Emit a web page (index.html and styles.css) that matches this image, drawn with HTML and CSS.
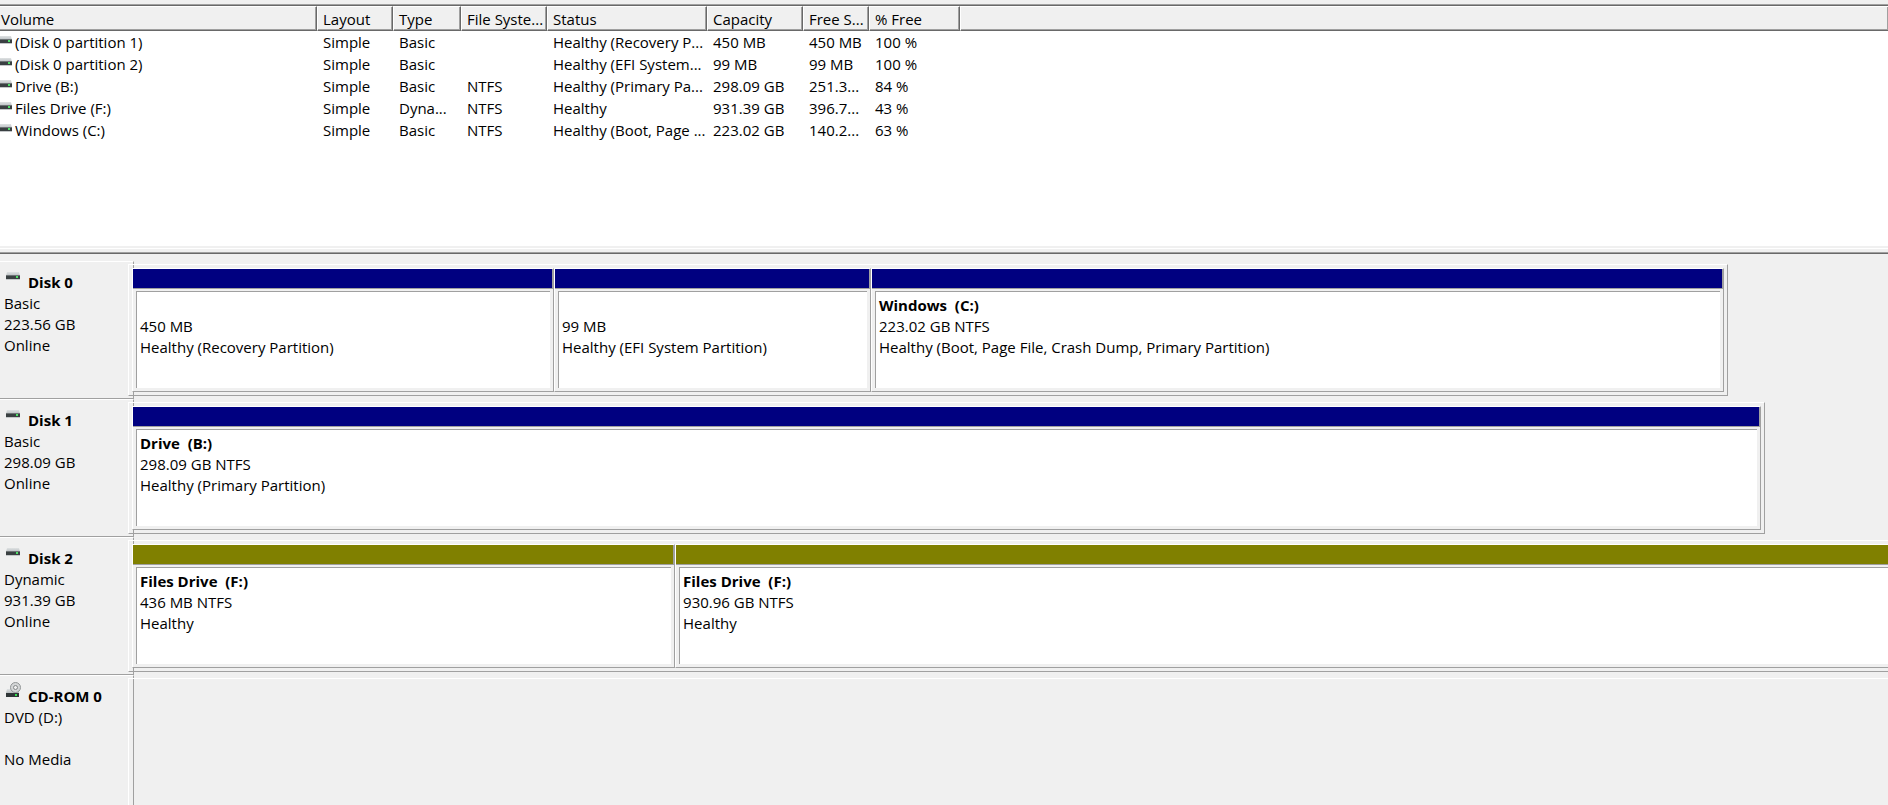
FILE: index.html
```html
<!DOCTYPE html>
<html lang="en">

<head>
    <meta charset="UTF-8">
    <meta name="viewport" content="width=device-width, initial-scale=1.0">
    <title>Disk Management</title>
    <link rel="stylesheet" href="styles.css">
</head>

<body>

    <!-- shared drive icons -->
    <svg class="defs" width="0" height="0" aria-hidden="true">
        <linearGradient id="lid" x1="0" y1="0" x2="0" y2="1">
            <stop offset="0" stop-color="#dfe2e3" />
            <stop offset="1" stop-color="#b8bdc0" />
        </linearGradient>
        <symbol id="drive" viewBox="0 0 14 8">
            <path d="M1 0h12L14 4H0z" fill="url(#lid)" />
            <rect y="3" width="14" height="4" fill="#6d7375" />
            <rect y="4" width="14" height="3" fill="#3a4042" />
            <rect y="7" width="14" height="1" fill="#c4c7c9" />
            <rect x="10" y="4" width="2" height="2" fill="#4fe068" />
        </symbol>
        <symbol id="cdrom" viewBox="0 0 15 16">
            <path d="M1 7h11l1 4H0z" fill="url(#lid)" />
            <circle cx="9.500" cy="5.500" r="5" fill="#d4d6d7" stroke="#929697" />
            <circle cx="9.500" cy="5.500" r="2" fill="#f0f0f0" stroke="#85898a" />
            <rect y="11" width="13" height="4" fill="#303638" />
            <rect x="9" y="12" width="2" height="2" fill="#35e050" />
        </symbol>
    </svg>

    <div class="volumes">
        <table class="volume-table">
            <colgroup>
                <col class="col-volume">
                <col class="col-layout">
                <col class="col-type">
                <col class="col-fs">
                <col class="col-status">
                <col class="col-capacity">
                <col class="col-free">
                <col class="col-percent">
                <col>
            </colgroup>
            <thead>
                <tr>
                    <th>Volume</th>
                    <th>Layout</th>
                    <th>Type</th>
                    <th>File Syste...</th>
                    <th>Status</th>
                    <th>Capacity</th>
                    <th>Free S...</th>
                    <th>% Free</th>
                    <th></th>
                </tr>
            </thead>
            <tbody>
                <tr>
                    <td><svg class="row-icon"><use href="#drive" /></svg>(Disk 0 partition 1)</td>
                    <td>Simple</td>
                    <td>Basic</td>
                    <td></td>
                    <td>Healthy (Recovery P...</td>
                    <td>450 MB</td>
                    <td>450 MB</td>
                    <td>100 %</td>
                    <td></td>
                </tr>
                <tr>
                    <td><svg class="row-icon"><use href="#drive" /></svg>(Disk 0 partition 2)</td>
                    <td>Simple</td>
                    <td>Basic</td>
                    <td></td>
                    <td>Healthy (EFI System...</td>
                    <td>99 MB</td>
                    <td>99 MB</td>
                    <td>100 %</td>
                    <td></td>
                </tr>
                <tr>
                    <td><svg class="row-icon"><use href="#drive" /></svg>Drive (B:)</td>
                    <td>Simple</td>
                    <td>Basic</td>
                    <td>NTFS</td>
                    <td>Healthy (Primary Pa...</td>
                    <td>298.09 GB</td>
                    <td>251.3...</td>
                    <td>84 %</td>
                    <td></td>
                </tr>
                <tr>
                    <td><svg class="row-icon"><use href="#drive" /></svg>Files Drive (F:)</td>
                    <td>Simple</td>
                    <td>Dyna...</td>
                    <td>NTFS</td>
                    <td>Healthy</td>
                    <td>931.39 GB</td>
                    <td>396.7...</td>
                    <td>43 %</td>
                    <td></td>
                </tr>
                <tr>
                    <td><svg class="row-icon"><use href="#drive" /></svg>Windows (C:)</td>
                    <td>Simple</td>
                    <td>Basic</td>
                    <td>NTFS</td>
                    <td>Healthy (Boot, Page ...</td>
                    <td>223.02 GB</td>
                    <td>140.2...</td>
                    <td>63 %</td>
                    <td></td>
                </tr>
            </tbody>
        </table>
    </div>

    <div class="splitter"></div>

    <div class="disks">
        <div class="disk">
            <div class="disk-label">
                <h2><svg class="disk-icon"><use href="#drive" /></svg>Disk 0</h2>
                <p>Basic</p>
                <p>223.56 GB</p>
                <p>Online</p>
            </div>
            <div class="graph-area">
                <div class="graph" style="width: 90.91%">
                    <div class="partition" style="flex-grow: 420">
                        <div class="bar primary"></div>
                        <div class="info">
                            <h3></h3>
                            <p>450 MB</p>
                            <p>Healthy (Recovery Partition)</p>
                        </div>
                    </div>
                    <div class="partition" style="flex-grow: 315">
                        <div class="bar primary"></div>
                        <div class="info">
                            <h3></h3>
                            <p>99 MB</p>
                            <p>Healthy (EFI System Partition)</p>
                        </div>
                    </div>
                    <div class="partition" style="flex-grow: 851">
                        <div class="bar primary"></div>
                        <div class="info">
                            <h3>Windows  (C:)</h3>
                            <p>223.02 GB NTFS</p>
                            <p>Healthy (Boot, Page File, Crash Dump, Primary Partition)</p>
                        </div>
                    </div>
                </div>
            </div>
        </div>

        <div class="disk">
            <div class="disk-label">
                <h2><svg class="disk-icon"><use href="#drive" /></svg>Disk 1</h2>
                <p>Basic</p>
                <p>298.09 GB</p>
                <p>Online</p>
            </div>
            <div class="graph-area">
                <div class="graph" style="width: 93.01%">
                    <div class="partition" style="flex-grow: 1">
                        <div class="bar primary"></div>
                        <div class="info">
                            <h3>Drive  (B:)</h3>
                            <p>298.09 GB NTFS</p>
                            <p>Healthy (Primary Partition)</p>
                        </div>
                    </div>
                </div>
            </div>
        </div>

        <div class="disk">
            <div class="disk-label">
                <h2><svg class="disk-icon"><use href="#drive" /></svg>Disk 2</h2>
                <p>Dynamic</p>
                <p>931.39 GB</p>
                <p>Online</p>
            </div>
            <div class="graph-area">
                <div class="graph" style="width: 102%">
                    <div class="partition" style="flex-grow: 541">
                        <div class="bar simple"></div>
                        <div class="info">
                            <h3>Files Drive  (F:)</h3>
                            <p>436 MB NTFS</p>
                            <p>Healthy</p>
                        </div>
                    </div>
                    <div class="partition" style="flex-grow: 1242">
                        <div class="bar simple"></div>
                        <div class="info">
                            <h3>Files Drive  (F:)</h3>
                            <p>930.96 GB NTFS</p>
                            <p>Healthy</p>
                        </div>
                    </div>
                </div>
            </div>
        </div>

        <div class="disk">
            <div class="disk-label">
                <h2><svg class="disk-icon cd"><use href="#cdrom" /></svg>CD-ROM 0</h2>
                <p>DVD (D:)</p>
                <p></p>
                <p>No Media</p>
            </div>
            <div class="graph-area">
                <div class="graph" style="width: 102%"></div>
            </div>
        </div>
    </div>

</body>

</html>
```
FILE: styles.css
```css
* {
    box-sizing: border-box;
}

body {
    font-family: "Open Sans", "Noto Sans", sans-serif;
    font-size: 15px;
    line-height: 21px;
    color: #000;
    background-color: #f0f0f0;
    margin: 0;
    height: 100vh;
    display: flex;
    flex-direction: column;
    overflow: hidden;
}

h2,
h3,
p {
    font-size: 15px;
    margin: 0;
    min-height: 21px;
    white-space: pre;
}

.defs {
    position: absolute;
}

/* volume list */
.volumes {
    flex: none;
    min-height: 242px;
    margin-top: 4px;
    border-top: 1px solid #a0a0a0;
    background-color: #fff;
}

.volume-table {
    width: 100%;
    table-layout: fixed;
    border-collapse: separate;
    border-spacing: 0;
    border-top: 1px solid #696969;
}

.col-volume { width: 317px; }
.col-layout { width: 76px; }
.col-type { width: 68px; }
.col-fs { width: 86px; }
.col-status { width: 160px; }
.col-capacity { width: 96px; }
.col-free { width: 66px; }
.col-percent { width: 91px; }

th,
td {
    padding: 0 0 0 6px;
    text-align: left;
    font-weight: normal;
    white-space: nowrap;
}

th {
    height: 25px;
    line-height: 20px;
    background-color: #f0f0f0;
    border-top: 1px solid #fff;
    border-left: 1px solid #fff;
    border-right: 1px solid #696969;
    border-bottom: 1px solid #696969;
    box-shadow: inset -1px -1px #a0a0a0;
    padding-left: 5px;
}

th:first-child {
    padding-left: 1px;
    border-left: none;
}

th:last-child {
    border-right: none;
}

td {
    height: 22px;
    line-height: 22px;
}

td:first-child {
    padding-left: 0;
}

.row-icon {
    width: 14px;
    height: 8px;
    margin-left: -2px;
    margin-right: 3px;
    vertical-align: 4px;
}

.splitter {
    flex: none;
    height: 8px;
    border-bottom: 1px solid #696969;
    box-shadow: inset 0 -1px #a0a0a0, inset 0 2px #f0f0f0, inset 0 3px #fff;
}

/* graphical view */
.disks {
    flex: 1;
    min-height: 0;
    padding-top: 7px;
    overflow: hidden;
}

.disk {
    display: flex;
    height: 138px;
}

.disk-label {
    flex: none;
    width: 134px;
    padding: 10px 4px 0;
    border-top: 1px solid #fff;
    border-right: 1px solid #a0a0a0;
    border-bottom: 1px solid #a0a0a0;
}

.disk-label h2 {
    display: flex;
    align-items: flex-start;
}

.disk-icon {
    width: 14px;
    height: 8px;
    margin: 0 8px 0 2px;
}

.disk-icon.cd {
    width: 15px;
    height: 16px;
    margin: -4px 7px 0 2px;
}

/* the graph frame laps over the label's right edge */
.graph-area {
    flex: 1;
    min-width: 0;
    margin-left: -6px;
    padding: 3px 0;
}

.graph {
    display: flex;
    height: 132px;
    padding: 3px;
    border: 1px solid #a0a0a0;
    border-top-color: #fff;
    border-left-color: #fff;
}

.partition {
    display: flex;
    flex-direction: column;
    flex-basis: 0;
    min-width: 0;
    background-color: #f0f0f0;
    border: 1px solid #a0a0a0;
    border-top-color: #fff;
    border-left-color: #fff;
}

.bar {
    height: 20px;
    border-right: 1px solid #a0a0a0;
    border-bottom: 1px solid #a0a0a0;
}

.primary {
    background-color: #000080;
}

.simple {
    background-color: #808000;
}

.info {
    flex: 1;
    margin: 2px 3px 3px;
    padding: 3px;
    background-color: #fff;
    border-top: 1px solid #a0a0a0;
    border-left: 1px solid #a0a0a0;
    overflow: hidden;
}
```
